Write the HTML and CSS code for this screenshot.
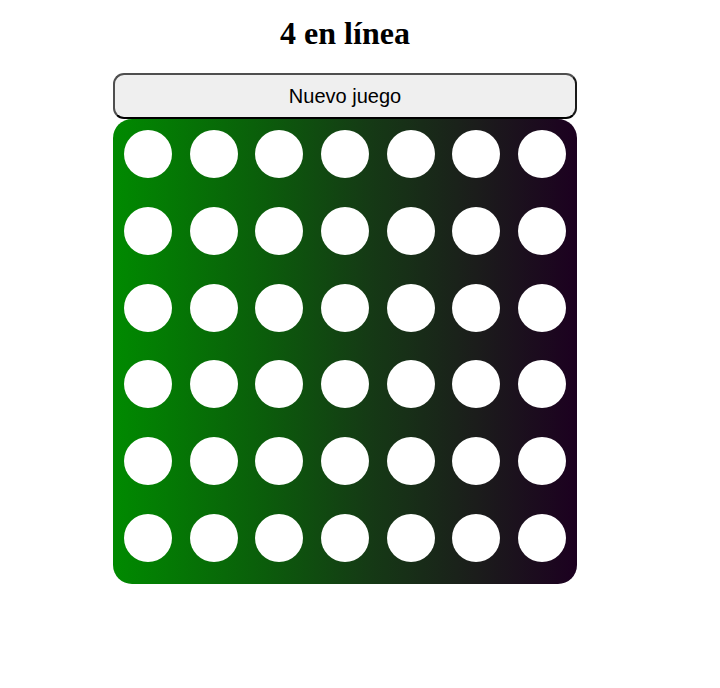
FILE: index.html
```html
<!DOCTYPE html>
<html lang="es">
<head>
<meta charset="utf-8">
<title>4 en línea</title>
<link rel="stylesheet" href="styles.css">
</head>
<body>
<div class="app">
  <h1 class="title">4 en línea</h1>
  <div class="game">
    <button class="new-game">Nuevo juego</button>
    <div class="board">
      <div class="cell"></div><div class="cell"></div><div class="cell"></div><div class="cell"></div><div class="cell"></div><div class="cell"></div><div class="cell"></div>
      <div class="cell"></div><div class="cell"></div><div class="cell"></div><div class="cell"></div><div class="cell"></div><div class="cell"></div><div class="cell"></div>
      <div class="cell"></div><div class="cell"></div><div class="cell"></div><div class="cell"></div><div class="cell"></div><div class="cell"></div><div class="cell"></div>
      <div class="cell"></div><div class="cell"></div><div class="cell"></div><div class="cell"></div><div class="cell"></div><div class="cell"></div><div class="cell"></div>
      <div class="cell"></div><div class="cell"></div><div class="cell"></div><div class="cell"></div><div class="cell"></div><div class="cell"></div><div class="cell"></div>
      <div class="cell"></div><div class="cell"></div><div class="cell"></div><div class="cell"></div><div class="cell"></div><div class="cell"></div><div class="cell"></div>
    </div>
  </div>
</div>
</body>
</html>
```
FILE: styles.css
```css
html, body {
  margin: 0;
  padding: 0;
  background: #ffffff;
}

.app {
  width: 690px;
  display: flex;
  flex-direction: column;
  align-items: center;
}

.title {
  font-family: "Liberation Serif", "Times New Roman", serif;
  font-weight: bold;
  font-size: 32px;
  line-height: 37px;
  margin: 15px 0 21px;
  color: #000;
}

.game {
  width: 464px;
  display: flex;
  flex-direction: column;
}

.new-game {
  box-sizing: border-box;
  width: 464px;
  height: 46px;
  margin: 0;
  padding: 1px 0 0;
  font-family: "Liberation Sans", Arial, sans-serif;
  font-size: 20px;
  color: #000;
  background: #efefef;
  border: 2px solid;
  border-color: #4f4f4f #1a1a1a #000 #4f4f4f;
  border-radius: 11px;
}

.board {
  box-sizing: border-box;
  width: 464px;
  height: 465px;
  padding: 11px 11px 22px;
  border-radius: 19px;
  background: linear-gradient(90deg, #008a00 0%, #0b5c0b 33%, #153a15 55%, #1b1d1b 78%, #1c0020 100%);
  display: grid;
  grid-template-columns: repeat(7, 48px);
  grid-template-rows: repeat(6, 48px);
  justify-content: space-between;
  align-content: space-between;
}

.cell {
  width: 48px;
  height: 48px;
  border-radius: 50%;
  background: #ffffff;
}
```
